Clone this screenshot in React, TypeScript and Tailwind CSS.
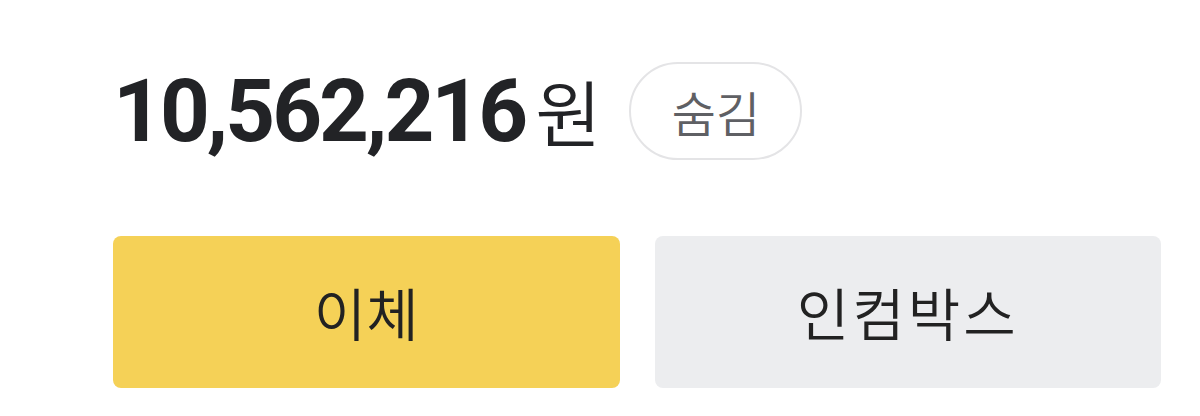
export default function App() {
  return (
    <main className="w-[1200px] h-[416px] bg-white overflow-hidden">
      <div className="pl-[113px] pr-[39px] pt-[62px]">
        <div className="flex items-center h-[98px]">
          <div className="flex items-baseline text-[#222326]">
            <span
              className="text-[87px] font-bold tracking-[-3px] leading-none"
              style={{ fontFamily: 'Roboto, "Noto Sans CJK KR", sans-serif' }}>
              10,562,216
            </span>
            <span
              className="ml-[10px] text-[72px] font-[350] leading-none"
              style={{ fontFamily: '"Noto Sans CJK KR", sans-serif' }}>
              원
            </span>
          </div>
          <button
            className="ml-[28px] w-[173px] h-[98px] rounded-full border-2 border-[#e4e4e6] bg-white flex items-center justify-center text-[48px] font-[350] text-[#5f6064]"
            style={{ fontFamily: '"Noto Sans CJK KR", sans-serif' }}>
            숨김
          </button>
        </div>
        <div
          className="mt-[76px] grid grid-cols-2 gap-[35px] font-[350]"
          style={{ fontFamily: '"Noto Sans CJK KR", sans-serif' }}>
          <button className="h-[152px] rounded-[8px] bg-[#f5d157] flex items-center justify-center text-[57px] text-[#222222]">
            이체
          </button>
          <button className="h-[152px] rounded-[8px] bg-[#ecedef] flex items-center justify-center text-[57px] tracking-[3px] text-[#222222]">
            인컴박스
          </button>
        </div>
      </div>
    </main>
  );
}
